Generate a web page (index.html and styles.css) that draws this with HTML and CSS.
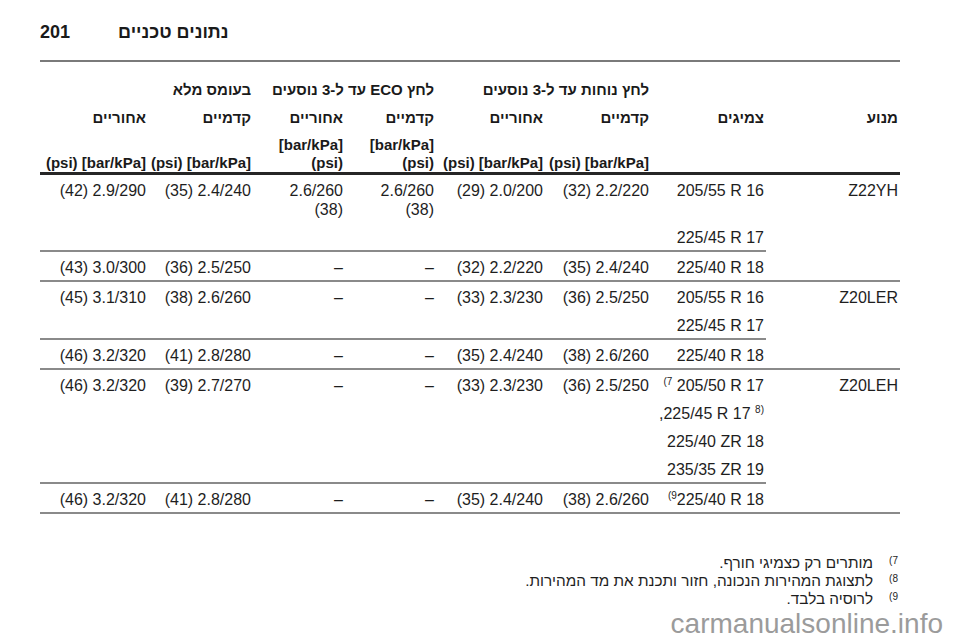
FILE: index.html
```html
<!DOCTYPE html>
<html lang="he" dir="rtl">
<head>
<meta charset="utf-8">
<title>נתונים טכניים 201</title>
<link rel="stylesheet" href="styles.css">
</head>
<body>
<div class="page">
  <header class="pagehead">
    <span class="pagenum">201</span>
    <span class="pagetitle">נתונים טכניים</span>
  </header>
  <div class="rule"></div>

  <table class="tyres">
    <colgroup>
      <col class="c1"><col class="c2"><col class="c3"><col class="c4">
      <col class="c5"><col class="c6"><col class="c7"><col class="c8">
    </colgroup>
    <thead>
      <tr>
        <th></th><th></th>
        <th colspan="2">לחץ נוחות עד ל-3 נוסעים</th>
        <th colspan="2">לחץ ECO עד ל-3 נוסעים</th>
        <th colspan="2">בעומס מלא</th>
      </tr>
      <tr>
        <th>מנוע</th><th>צמיגים</th>
        <th>קדמיים</th><th>אחוריים</th>
        <th>קדמיים</th><th>אחוריים</th>
        <th>קדמיים</th><th>אחוריים</th>
      </tr>
      <tr class="units">
        <th></th><th></th>
        <th class="n">(psi) [bar/kPa]</th>
        <th class="n">(psi) [bar/kPa]</th>
        <th class="n">[bar/kPa]<br>(psi)</th>
        <th class="n">[bar/kPa]<br>(psi)</th>
        <th class="n">(psi) [bar/kPa]</th>
        <th class="n">(psi) [bar/kPa]</th>
      </tr>
    </thead>
    <tbody>
      <tr class="sep">
        <td class="n" rowspan="3">Z22YH</td>
        <td class="n">205/55 R 16</td>
        <td class="n">(32) 2.2/220</td>
        <td class="n">(29) 2.0/200</td>
        <td class="n">2.6/260<br>(38)</td>
        <td class="n">2.6/260<br>(38)</td>
        <td class="n">(35) 2.4/240</td>
        <td class="n">(42) 2.9/290</td>
      </tr>
      <tr>
        <td class="n">225/45 R 17</td>
        <td></td><td></td><td></td><td></td><td></td><td></td>
      </tr>
      <tr class="sep">
        <td class="n">225/40 R 18</td>
        <td class="n">(35) 2.4/240</td>
        <td class="n">(32) 2.2/220</td>
        <td class="n">–</td>
        <td class="n">–</td>
        <td class="n">(36) 2.5/250</td>
        <td class="n">(43) 3.0/300</td>
      </tr>

      <tr class="sep">
        <td class="n" rowspan="3">Z20LER</td>
        <td class="n">205/55 R 16</td>
        <td class="n">(36) 2.5/250</td>
        <td class="n">(33) 2.3/230</td>
        <td class="n">–</td>
        <td class="n">–</td>
        <td class="n">(38) 2.6/260</td>
        <td class="n">(45) 3.1/310</td>
      </tr>
      <tr>
        <td class="n">225/45 R 17</td>
        <td></td><td></td><td></td><td></td><td></td><td></td>
      </tr>
      <tr class="sep">
        <td class="n">225/40 R 18</td>
        <td class="n">(38) 2.6/260</td>
        <td class="n">(35) 2.4/240</td>
        <td class="n">–</td>
        <td class="n">–</td>
        <td class="n">(41) 2.8/280</td>
        <td class="n">(46) 3.2/320</td>
      </tr>

      <tr class="sep">
        <td class="n lastengine" rowspan="5">Z20LEH</td>
        <td class="n"><sup>(7</sup> 205/50 R 17</td>
        <td class="n">(36) 2.5/250</td>
        <td class="n">(33) 2.3/230</td>
        <td class="n">–</td>
        <td class="n">–</td>
        <td class="n">(39) 2.7/270</td>
        <td class="n">(46) 3.2/320</td>
      </tr>
      <tr>
        <td class="n">,225/45 R 17 <sup>8)</sup></td>
        <td></td><td></td><td></td><td></td><td></td><td></td>
      </tr>
      <tr>
        <td class="n">225/40 ZR 18</td>
        <td></td><td></td><td></td><td></td><td></td><td></td>
      </tr>
      <tr>
        <td class="n">235/35 ZR 19</td>
        <td></td><td></td><td></td><td></td><td></td><td></td>
      </tr>
      <tr class="sep last">
        <td class="n"><sup>(9</sup>225/40 R 18</td>
        <td class="n">(38) 2.6/260</td>
        <td class="n">(35) 2.4/240</td>
        <td class="n">–</td>
        <td class="n">–</td>
        <td class="n">(41) 2.8/280</td>
        <td class="n">(46) 3.2/320</td>
      </tr>
    </tbody>
  </table>

  <div class="notes">
    <span class="mark" dir="ltr">(7</span><span class="note">מותרים רק כצמיגי חורף.</span>
    <span class="mark" dir="ltr">(8</span><span class="note">לתצוגת המהירות הנכונה, חזור ותכנת את מד המהירות.</span>
    <span class="mark" dir="ltr">(9</span><span class="note">לרוסיה בלבד.</span>
  </div>
</div>
<div class="watermark" dir="ltr">carmanualsonline.info</div>
</body>
</html>
```

FILE: styles.css
```css
html, body {
  margin: 0;
  padding: 0;
  background: #ffffff;
}

body {
  font-family: "Liberation Sans", Arial, "DejaVu Sans", sans-serif;
  color: #1e1e1e;
  font-size: 16px;
  width: 960px;
  height: 642px;
  overflow: hidden;
  position: relative;
}

.page {
  padding: 20px 60px 0 40px;
}

.pagehead {
  direction: ltr;
  display: flex;
  align-items: center;
  gap: 48px;
  height: 24px;
  line-height: 24px;
  font-weight: bold;
  font-size: 18px;
  color: #1a1a1a;
}

.pagenum {
  padding-left: 0;
}

.pagetitle {
  direction: rtl;
}

.rule {
  margin-top: 16px;
  height: 2px;
  background: #7a7a7a;
}

.tyres {
  margin-top: 12px;
  width: 860px;
  table-layout: fixed;
  border-collapse: collapse;
}

.c1 { width: 134px; }
.c2 { width: 115px; }
.c3 { width: 106px; }
.c4 { width: 109px; }
.c5 { width: 91px; }
.c6 { width: 92px; }
.c7 { width: 105px; }
.c8 { width: 108px; }

.tyres th,
.tyres td {
  padding: 6px 2px 3px 0;
  text-align: right;
  vertical-align: top;
  white-space: nowrap;
  line-height: 19px;
}

.tyres th {
  font-size: 15px;
  font-weight: bold;
  color: #1a1a1a;
}

.tyres .units th {
  vertical-align: bottom;
  line-height: 18px;
  padding-bottom: 0;
  border-bottom: 3px solid #262626;
}

.tyres td {
  font-weight: normal;
}

.n {
  direction: ltr;
}

.tyres tr.sep > td {
  border-top: 2px solid #8a8a8a;
}

.tyres tr.last > td,
.tyres td.lastengine {
  border-bottom: 2px solid #8a8a8a;
}

.tyres thead + tbody tr.sep:first-child > td {
  border-top: none;
}

sup {
  font-size: 10px;
  line-height: 0;
  vertical-align: 6px;
}

.notes {
  margin-top: 40px;
  display: grid;
  grid-template-columns: 27px 1fr;
  line-height: 18px;
  font-size: 15.3px;
}

.mark {
  font-size: 10px;
  line-height: 14px;
  text-align: right;
  padding-right: 2px;
}

.note {
  text-align: right;
}

.watermark {
  position: absolute;
  right: 17px;
  top: 610px;
  font-size: 28px;
  line-height: 28px;
  color: #9b9b9b;
  font-family: "Liberation Sans", Arial, sans-serif;
}
```
